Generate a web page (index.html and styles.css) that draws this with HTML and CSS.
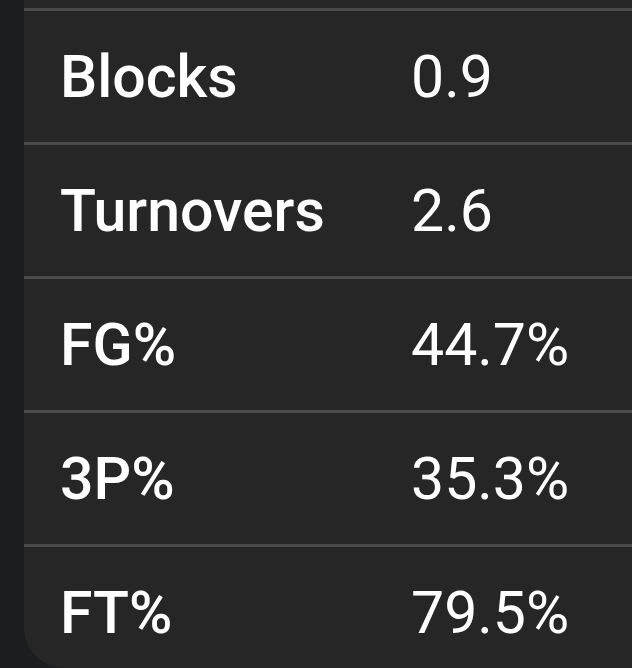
FILE: index.html
```
<!DOCTYPE html>
<html>
<head>
<meta charset="utf-8">
<link rel="stylesheet" href="styles.css">
</head>
<body>
<div class="page">
  <div class="card">
    <div class="row"><span class="label">Blocks</span><span class="value">0.9</span></div>
    <div class="row"><span class="label">Turnovers</span><span class="value">2.6</span></div>
    <div class="row"><span class="label">FG%</span><span class="value">44.7%</span></div>
    <div class="row"><span class="label">3P%</span><span class="value">35.3%</span></div>
    <div class="row"><span class="label">FT%</span><span class="value">79.5%</span></div>
  </div>
</div>
</body>
</html>
```
FILE: styles.css
```
html, body {
  margin: 0;
  padding: 0;
  background: #1c1d1e;
  overflow: hidden;
}
.page {
  width: 632px;
  height: 668px;
  padding-left: 24px;
  box-sizing: border-box;
  background: #1c1d1e;
}
.card {
  background: #262626;
  height: 668px;
  border-bottom-left-radius: 40px;
  padding-top: 8px;
  box-sizing: border-box;
  font-family: Roboto, "Open Sans", sans-serif;
  color: #ffffff;
}
.row {
  display: grid;
  grid-template-columns: 351px 1fr;
  align-items: center;
  height: 131px;
  border-top: 3px solid #4a4c4c;
  padding-left: 36px;
  font-size: 59px;
  line-height: 1;
}
.label {
  display: block;
  font-weight: 500;
}
.value {
  display: block;
  font-weight: 400;
}
```
